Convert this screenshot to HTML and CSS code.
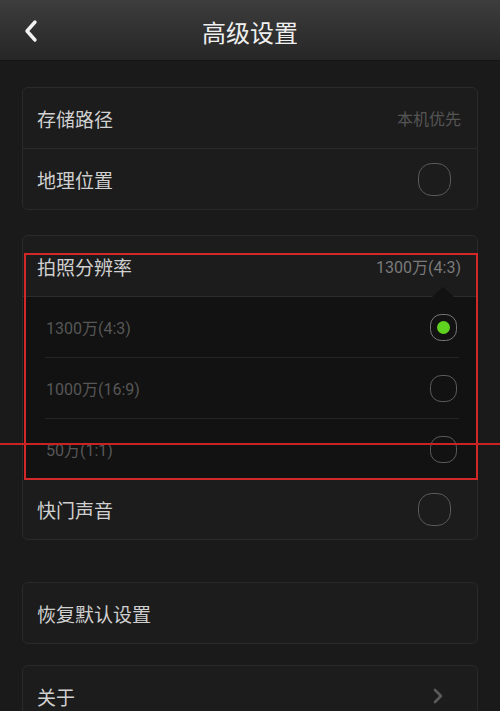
FILE: index.html
```html
<!DOCTYPE html>
<html lang="zh-CN">
<head>
<meta charset="utf-8">
<title>高级设置</title>
<link rel="stylesheet" href="styles.css">
</head>
<body>
<header class="topbar">
  <span class="back">
    <svg width="16" height="24" viewBox="0 0 16 24"><path d="M12 3 L4 12 L12 21" fill="none" stroke="#f2f2f2" stroke-width="3.4" stroke-linecap="round" stroke-linejoin="round"/></svg>
  </span>
  <h1 class="title">高级设置</h1>
</header>
<main class="content">
  <section class="card">
    <div class="row"><span class="label">存储路径</span><span class="value">本机优先</span></div>
    <div class="row sep"><span class="label">地理位置</span><span class="toggle"></span></div>
  </section>

  <section class="card card-gap">
    <div class="row"><span class="label">拍照分辨率</span><span class="value value-light">1300万(4:3)</span></div>
    <div class="dropdown">
      <span class="pointer"></span>
      <div class="option"><span class="opt-label">1300万(4:3)</span><span class="radio radio-on"><span class="dot"></span></span></div>
      <div class="option opt-sep"><span class="opt-label">1000万(16:9)</span><span class="radio"></span></div>
      <div class="option opt-sep"><span class="opt-label">50万(1:1)</span><span class="radio"></span></div>
    </div>
    <div class="row"><span class="label">快门声音</span><span class="toggle"></span></div>
  </section>

  <section class="card card-gap-lg">
    <div class="row"><span class="label">恢复默认设置</span></div>
  </section>

  <section class="card card-gap-sm">
    <div class="row row-link"><span class="label">关于</span>
      <svg class="chev" width="12" height="16" viewBox="0 0 12 16"><path d="M3 2 L9 8 L3 14" fill="none" stroke="#5a5a5a" stroke-width="2.6" stroke-linecap="round" stroke-linejoin="round"/></svg>
    </div>
  </section>
</main>
<div class="mark-box"></div>
<div class="mark-line"></div>
</body>
</html>
```

FILE: styles.css
```css
html, body {
  margin: 0;
  padding: 0;
}
body {
  background: #1a1a1a;
  width: 500px;
  height: 711px;
  overflow: hidden;
  font-family: "Roboto", "Noto Sans CJK SC", sans-serif;
  color: #d2d2d2;
  position: relative;
}
.topbar {
  height: 60px;
  border-bottom: 1px solid #151515;
  background: linear-gradient(#3d3d3d, #262626);
  display: flex;
  align-items: center;
  justify-content: center;
  position: relative;
}
.back {
  position: absolute;
  left: 23px;
  top: 19px;
  display: flex;
}
.title {
  margin: 0;
  font-size: 24px;
  font-weight: 400;
  color: #efefef;
  letter-spacing: 0;
  padding-top: 2px;
}
.content {
  padding: 26px 22px 0;
  display: flex;
  flex-direction: column;
}
.card {
  border: 1px solid #2a2a2a;
  border-radius: 6px;
  background: #1c1c1c;
  overflow: hidden;
}
.card-gap { margin-top: 25px; }
.card-gap-lg { margin-top: 42px; }
.card-gap-sm { margin-top: 21px; }
.row {
  height: 60px;
  display: flex;
  align-items: center;
  justify-content: space-between;
  padding: 0 26px 0 14px;
}
.row.sep { border-top: 1px solid #2a2a2a; height: 61px; box-sizing: border-box; height: 61px; }
.row:first-child { padding-right: 16px; }
.row-link { padding-right: 33px !important; }
.label {
  font-size: 19px;
  color: #d0d0d0;
}
.value {
  font-size: 16px;
  color: #555555;
}
.value-light { color: #7a7a7a; }
.toggle {
  width: 31px;
  height: 31px;
  border: 1.6px solid #5a5a5a;
  border-radius: 42%;
}
.dropdown {
  background: #121212;
  border-top: 1px solid #2c2c2c;
  position: relative;
}
.pointer {
  position: absolute;
  right: 23px;
  top: -10px;
  width: 0;
  height: 0;
  border-left: 11px solid transparent;
  border-right: 11px solid transparent;
  border-bottom: 10px solid #121212;
}
.option {
  height: 60px;
  display: flex;
  align-items: center;
  justify-content: space-between;
  padding: 0 20px 0 23px;
}
.opt-sep {
  height: 61px;
  box-sizing: border-box;
  border-top: 1px solid #252525;
  margin: 0 18px 0 22px;
  padding: 0 2px 0 1px;
}
.opt-label {
  font-size: 16px;
  color: #575757;
}
.radio {
  width: 25px;
  height: 25px;
  border: 1.5px solid #5c5c5c;
  border-radius: 42%;
  display: flex;
  align-items: center;
  justify-content: center;
}
.radio-on { border-color: #777; }
.dot {
  width: 13px;
  height: 13px;
  border-radius: 50%;
  background: #5fd21f;
}
.chev { display: block; }
.mark-box {
  position: absolute;
  left: 24px;
  top: 253px;
  width: 450px;
  height: 223px;
  border: 2px solid #d32828;
}
.mark-line {
  position: absolute;
  left: 0;
  top: 443px;
  width: 500px;
  height: 2px;
  background: #c82222;
}
```
